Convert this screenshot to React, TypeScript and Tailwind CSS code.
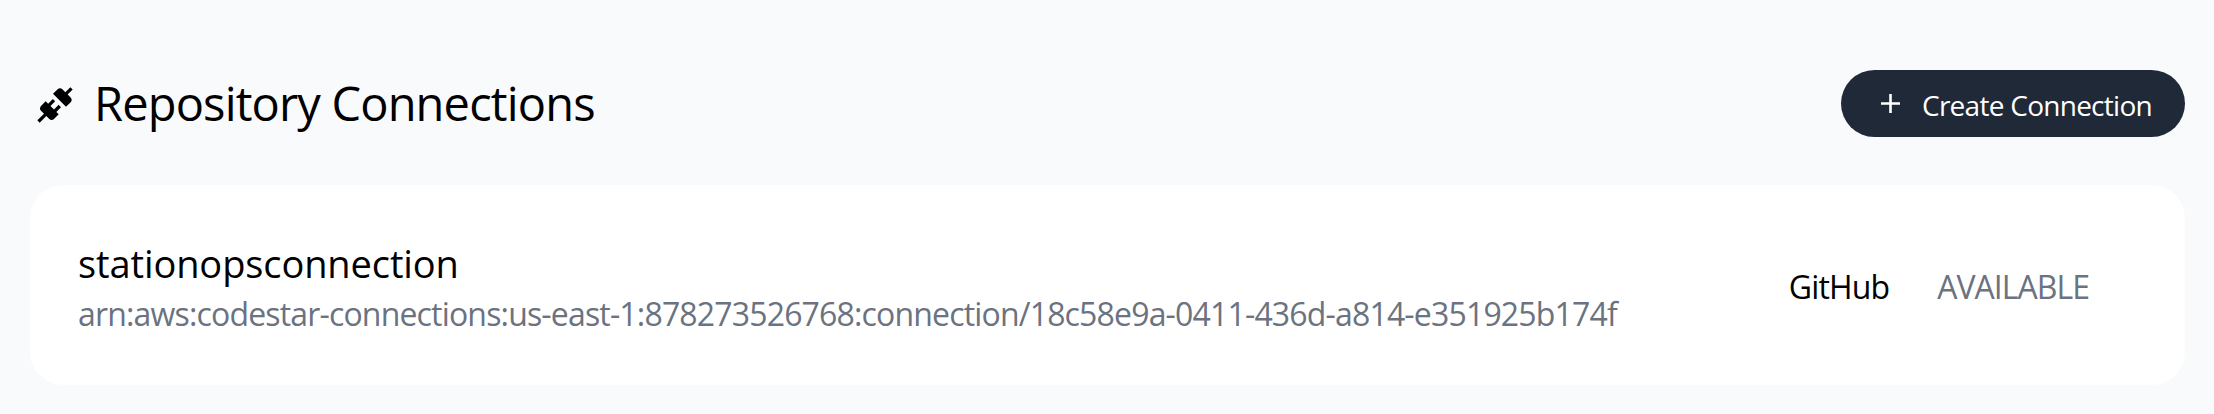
function ConnectionIcon() {
  return (
    <svg className="mt-[2px] mr-[19px] ml-[5px] size-[40px] shrink-0" viewBox="0 0 24 24" fill="currentColor" aria-hidden="true">
      <path d="M21.4 7.5C22.2 8.3 22.2 9.6 21.4 10.3L18.6 13.1L10.8 5.3L13.6 2.5C14.4 1.7 15.7 1.7 16.4 2.5L18.2 4.3L21.2 1.3L22.6 2.7L19.6 5.7L21.4 7.5M15.6 13.3L14.2 11.9L11.4 14.7L9.3 12.6L12.1 9.8L10.7 8.4L7.9 11.2L6.4 9.8L3.6 12.6C2.8 13.4 2.8 14.7 3.6 15.4L5.4 17.2L1.4 21.2L2.8 22.6L6.8 18.6L8.6 20.4C9.4 21.2 10.7 21.2 11.4 20.4L14.2 17.6L12.8 16.2L15.6 13.3Z" />
    </svg>
  );
}

function PlusIcon() {
  return (
    <svg className="mr-[22px] size-[19px] shrink-0" viewBox="0 0 19 19" fill="none" stroke="currentColor" strokeWidth="2.6" aria-hidden="true">
      <path d="M9.5 0v19M0 9.5h19" />
    </svg>
  );
}

export default function App() {
  return (
    <main className="h-[414px] bg-[#f9fafb] pt-[70px] pr-[29px] pl-[30px] font-['Open_Sans','Noto_Sans',sans-serif] whitespace-nowrap text-black">
      <header className="flex h-[67px] items-center justify-between">
        <h1 className="flex items-center">
          <ConnectionIcon />
          <span className="-mt-[1px] text-[47px] leading-[64px] tracking-[-0.84px]">Repository Connections</span>
        </h1>
        <button className="flex h-[67px] w-[344px] items-center rounded-full bg-[#1f2937] pl-[40px] text-white">
          <PlusIcon />
          <span className="mt-[3px] text-[28px] leading-[40px] tracking-[-0.73px]">Create Connection</span>
        </button>
      </header>
      <section className="mt-[48px] flex h-[200px] items-center justify-between rounded-[33px] bg-white pt-[3px] pr-[96px] pl-[48px]">
        <div>
          <h2 className="text-[38px] leading-[52px] tracking-[-0.1px]">stationopsconnection</h2>
          <p className="mt-[1px] -mb-[1px] text-[32px] leading-[48px] tracking-[-0.83px] text-[#6b7280]">
            arn:aws:codestar-connections:us-east-1:878273526768:connection/18c58e9a-0411-436d-a814-e351925b174f
          </p>
        </div>
        <div className="flex gap-[48px] pt-[1px] text-[32px] leading-[46px]">
          <span className="tracking-[-0.85px]">GitHub</span>
          <span className="tracking-[-0.98px] text-[#6b7280]">AVAILABLE</span>
        </div>
      </section>
    </main>
  );
}
